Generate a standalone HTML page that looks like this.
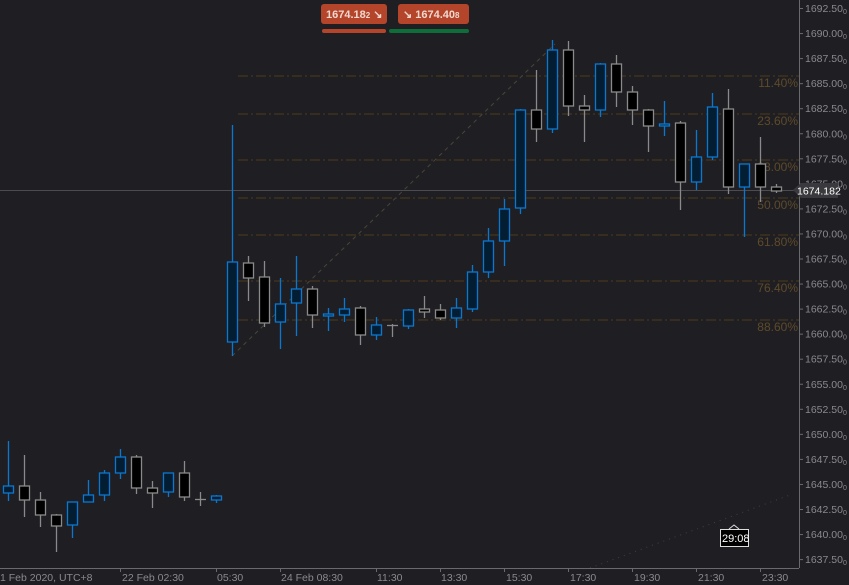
<!DOCTYPE html>
<html><head><meta charset="utf-8"><style>
body{margin:0;background:#1f1f23;width:849px;height:585px;overflow:hidden;font-family:"Liberation Sans",sans-serif}
svg{display:block}
.t{fill:#8a8a8e;font-size:10.5px}
.f{fill:#5e4a2a;font-size:12px;text-anchor:end}
.u{stroke:#0a78d0;fill:#031d33;stroke-width:1.3}
.d{stroke:#8a8a8a;fill:#000;stroke-width:1.3}
</style></head><body>
<svg width="849" height="585" xmlns="http://www.w3.org/2000/svg">
<rect width="849" height="585" fill="#1f1f23"/>
<g stroke="#4d3b1a" stroke-width="1" stroke-dasharray="10,3,2,3">
<line x1="238" y1="76" x2="799" y2="76"/><line x1="238" y1="114" x2="799" y2="114"/>
<line x1="238" y1="160" x2="799" y2="160"/><line x1="238" y1="198" x2="799" y2="198"/>
<line x1="238" y1="235" x2="799" y2="235"/><line x1="238" y1="281" x2="799" y2="281"/>
<line x1="238" y1="320" x2="799" y2="320"/>
</g>
<g class="f"><text x="798" y="87">11.40%</text><text x="798" y="125">23.60%</text><text x="798" y="171">38.00%</text><text x="798" y="209">50.00%</text><text x="798" y="246">61.80%</text><text x="798" y="292">76.40%</text><text x="798" y="331">88.60%</text></g>
<line x1="0" y1="190.5" x2="799" y2="190.5" stroke="#4c4c50"/>
<line x1="232" y1="356" x2="555" y2="44" stroke="#4a4438" stroke-dasharray="4,4"/>
<line x1="590" y1="568" x2="790" y2="495" stroke="#3e3e44" stroke-dasharray="1,5"/>
<g id="c"></g>
<line x1="799.5" y1="0" x2="799.5" y2="568" stroke="#6a6a6e"/>
<line x1="0" y1="568.5" x2="799" y2="568.5" stroke="#6a6a6e"/>
<g id="ax"></g>
<g class="t">
<text x="0" y="581">1 Feb 2020, UTC+8</text><text x="122" y="581">22 Feb 02:30</text><text x="217" y="581">05:30</text><text x="281" y="581">24 Feb 08:30</text><text x="377" y="581">11:30</text><text x="441" y="581">13:30</text><text x="506" y="581">15:30</text><text x="570" y="581">17:30</text><text x="634" y="581">19:30</text><text x="698" y="581">21:30</text><text x="762" y="581">23:30</text>
</g>
<g stroke="#6a6a6e"><line x1="120.5" y1="568" x2="120.5" y2="572"/><line x1="216.5" y1="568" x2="216.5" y2="572"/><line x1="280.5" y1="568" x2="280.5" y2="572"/><line x1="376.5" y1="568" x2="376.5" y2="572"/><line x1="440.5" y1="568" x2="440.5" y2="572"/><line x1="504.5" y1="568" x2="504.5" y2="572"/><line x1="568.5" y1="568" x2="568.5" y2="572"/><line x1="632.5" y1="568" x2="632.5" y2="572"/><line x1="696.5" y1="568" x2="696.5" y2="572"/><line x1="760.5" y1="568" x2="760.5" y2="572"/></g>
<polygon points="793,190 801,183 838,183 838,198 801,198" fill="#3a3a3e"/>
<text x="797" y="194.5" fill="#fff" font-size="10.5">1674.182</text>
<rect x="720.5" y="529.5" width="28" height="17" fill="#000" stroke="#ddd"/>
<polyline points="729,529 734,525 739,529" fill="none" stroke="#ddd"/>
<text x="722" y="542" fill="#fff" font-size="11">29:08</text>
<rect x="321" y="4" width="66" height="20" rx="3" fill="#b5452a"/>
<text x="326" y="18" fill="#f0d8d0" font-size="11" font-weight="bold">1674.18<tspan font-size="8">2</tspan> ↘</text>
<rect x="398" y="4" width="71" height="20" rx="3" fill="#b5452a"/>
<text x="403" y="18" fill="#f0d8d0" font-size="11" font-weight="bold">↘  1674.40<tspan font-size="8">8</tspan></text>
<rect x="322" y="29" width="64" height="4" rx="2" fill="#b5452a"/>
<rect x="389" y="29" width="80" height="4" rx="2" fill="#0d6e3a"/>
</svg>
<script>
var C=[
[8,'u',441,486,493,501],[24,'d',455,486,500,517],[40,'d',492,500,515,527],[56,'d',514,515,526,552],[72,'u',502,502,525,538],[88,'u',480,495,502,502],[104,'u',470,473,495,501],[120,'u',449,457,473,479],[136,'d',455,457,488,494],[152,'d',481,488,493,508],[168,'u',473,473,492,497],[184,'d',461,473,497,501],[200,'x',492,499,499,506],[216,'u',495,496,500,503],
[232,'u',125,262,342,356],[248,'d',256,263,278,301],[264,'d',261,277,323,327],[280,'u',278,304,322,349],[296,'u',256,289,303,336],[312,'d',286,289,315,328],[328,'u',308,314,316,331],[344,'u',298,309,315,322],[360,'d',306,308,335,345],[376,'u',317,325,335,340],[392,'x',324,325,325,337],[408,'u',309,310,326,329],[424,'d',296,309,312,318],[440,'d',304,310,318,320],[456,'u',298,308,318,328],[472,'u',265,272,309,312],
[488,'u',228,241,272,278],[504,'u',199,209,241,266],[520,'u',109,110,208,214],[536,'d',70,110,129,142],[552,'u',40,50,129,133],[568,'d',41,50,106,116],[584,'d',95,106,110,142],[600,'u',63,64,110,117],[616,'d',55,64,92,107],[632,'d',86,92,110,125],[648,'d',109,110,126,152],[664,'u',101,124,126,136],[680,'d',121,123,182,210],[696,'u',130,157,182,190],[712,'u',93,107,157,160],[728,'d',89,109,187,194],[744,'u',164,164,187,237],[760,'d',137,164,187,202],[776,'d',184,187,191,193]];
var s='';
C.forEach(function(c){var x=c[0],k=c[1],col=k=='u'?'#0a78d0':'#8a8a8a';
s+='<line x1="'+(x+.5)+'" y1="'+c[2]+'" x2="'+(x+.5)+'" y2="'+c[5]+'" stroke="'+col+'" stroke-width="1.3"/>';
if(k=='x'){s+='<line x1="'+(x-5)+'" y1="'+(c[3]+.5)+'" x2="'+(x+6)+'" y2="'+(c[3]+.5)+'" stroke="'+col+'" stroke-width="1.3"/>';}
else s+='<rect class="'+k+'" x="'+(x-4.5)+'" y="'+c[3]+'" width="10" height="'+Math.max(2,c[4]-c[3])+'"/>';});
document.getElementById('c').innerHTML=s;
var a='';
for(var i=0;i<23;i++){var p=(1692.5-i*2.5).toFixed(2),y=8+i*25.05;
a+='<line x1="799" y1="'+(y+.5)+'" x2="803" y2="'+(y+.5)+'" stroke="#6a6a6e"/><text class="t" x="805" y="'+(y+4)+'">'+p+'<tspan font-size="7" dy="2">0</tspan></text>';}
document.getElementById('ax').innerHTML=a;
</script>
</body></html>
